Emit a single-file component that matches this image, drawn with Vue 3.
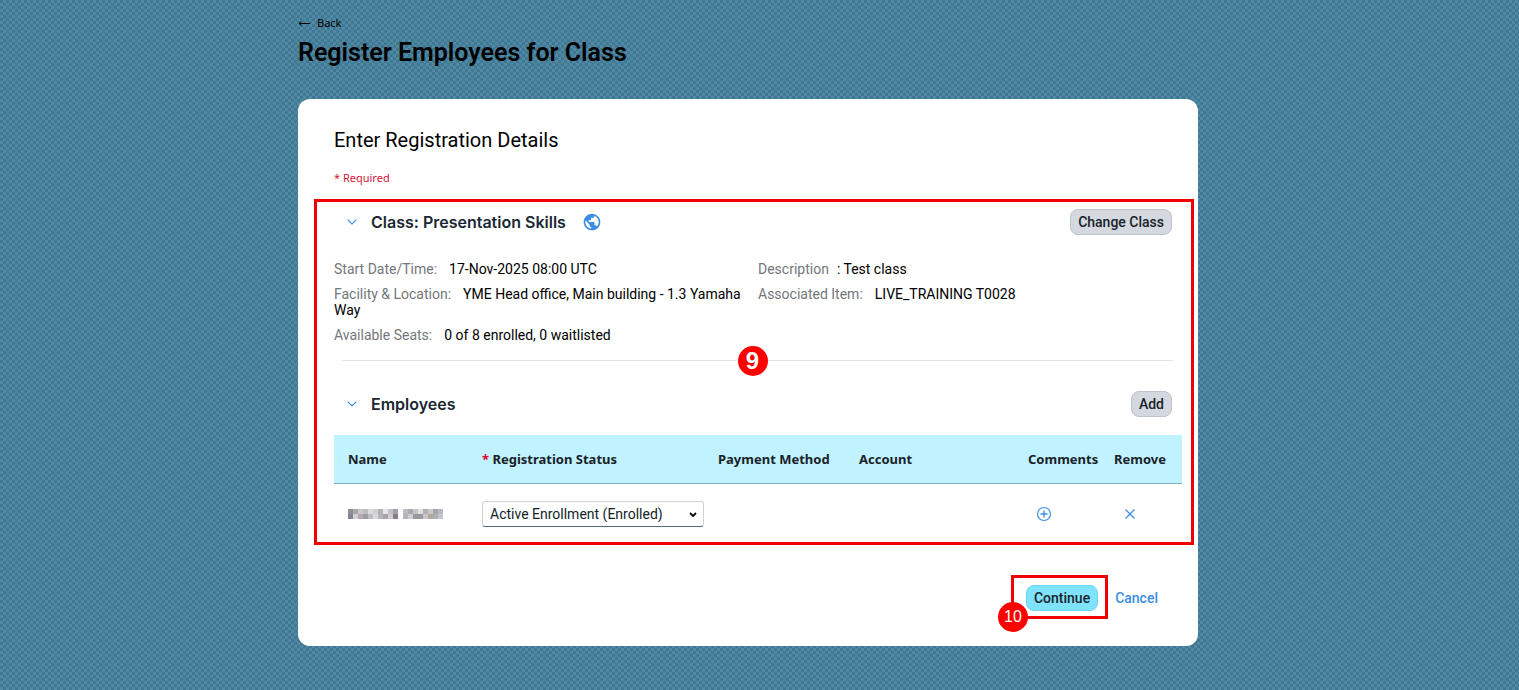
<script setup>
import { ref } from 'vue'

const status = ref('Active Enrollment (Enrolled)')
const classOpen = ref(true)
const employeesOpen = ref(true)

const shades = [
  '8d9099', 'a9a6a8', 'c9c9cd', 'bdbcc0', 'dcdcdf', 'cfcfd2', 'b3b2b5', 'e6e6e8', 'c2c0c4', 'a09da3', 'ffffff', 'b9bdc4', 'a9a8ab', 'c4c4c8', 'e0e0e2', 'b2afb2', 'c9c8cb', 'a4a5a9', 'b5b9c0',
  '7f8590', 'd6cfd3', 'b1aab0', '9d9ba4', 'bcbcc0', 'd9d9db', 'b8b6b9', 'a8a5aa', 'd0cdd0', '887f85', 'ffffff', 'b2b5bd', 'd2cdd0', '9a989d', '9899a1', 'c9c7ca', 'b3a89f', 'a9afb3', 'c0c7d1',
]
const tiles = shades.map((fill, i) => ({ fill: '#' + fill, x: (i % 19) * 5, y: Math.floor(i / 19) * 5 }))
</script>

<template>
  <div class="page">
    <main class="column">
      <a href="#" class="back">
        <svg width="12" height="8" viewBox="0 0 12 8" aria-hidden="true"><path d="M12 4.500H1M3.500 2.500L1 4.500l2.500 2" fill="none" stroke="currentColor" /></svg>
        Back
      </a>
      <h1>Register Employees for Class</h1>

      <section class="card">
        <h2>Enter Registration Details</h2>
        <p class="required">* Required</p>

        <div class="panel">
          <div class="bar">
            <button class="toggle" aria-label="Toggle class details" @click="classOpen = !classOpen">
              <svg width="10" height="6" viewBox="0 0 10 6"><path d="M.7.7L5 5 9.300.7" fill="none" stroke="currentColor" stroke-width="1.200" /></svg>
            </button>
            <h3>Class: Presentation Skills</h3>
            <svg class="globe" width="20" height="20" viewBox="0 0 24 24" aria-hidden="true">
              <path fill="#3b8ee4" d="M12 2C6.480 2 2 6.480 2 12s4.480 10 10 10 10-4.480 10-10S17.520 2 12 2zm-1 17.930c-3.950-.49-7-3.850-7-7.930 0-.62.08-1.210.21-1.790L9 15v1c0 1.100.9 2 2 2v1.930zm6.900-2.540c-.26-.81-1-1.390-1.900-1.390h-1v-3c0-.55-.45-1-1-1H8v-2h2c.55 0 1-.45 1-1V7h2c1.100 0 2-.9 2-2v-.41c2.930 1.190 5 4.060 5 7.410 0 2.080-.8 3.970-2.100 5.390z" />
            </svg>
            <button class="btn">Change Class</button>
          </div>

          <div class="details">
            <div class="group">
              <p><span>Start Date/Time:</span>17-Nov-2025 08:00 UTC</p>
              <p><span>Facility &amp; Location:</span>YME Head office, Main building - 1.3 Yamaha Way</p>
              <p><span>Available Seats:</span>0 of 8 enrolled, 0 waitlisted</p>
            </div>
            <div class="group">
              <p><span class="tight">Description</span>: Test class</p>
              <p><span>Associated Item:</span>LIVE_TRAINING T0028</p>
            </div>
          </div>

          <div class="divider"><b class="badge nine">9</b></div>

          <div class="bar">
            <button class="toggle" aria-label="Toggle employees" @click="employeesOpen = !employeesOpen">
              <svg width="10" height="6" viewBox="0 0 10 6"><path d="M.7.7L5 5 9.300.7" fill="none" stroke="currentColor" stroke-width="1.200" /></svg>
            </button>
            <h3>Employees</h3>
            <button class="btn">Add</button>
          </div>

          <div class="table-wrap">
            <table>
              <colgroup><col class="c1" /><col class="c2" /><col class="c3" /><col class="c4" /><col class="c5" /><col class="c6" /></colgroup>
              <thead>
                <tr>
                  <th>Name</th>
                  <th><label for="status"><i>*</i> Registration Status</label></th>
                  <th>Payment Method</th>
                  <th>Account</th>
                  <th>Comments</th>
                  <th>Remove</th>
                </tr>
              </thead>
              <tbody>
                <tr>
                  <td>
                    <svg class="mosaic" width="95" height="10" viewBox="0 0 95 10" shape-rendering="crispEdges" role="img" aria-label="Name hidden">
                      <rect v-for="(t, i) in tiles" :key="i" :x="t.x" :y="t.y" width="5" height="5" :fill="t.fill" />
                    </svg>
                  </td>
                  <td>
                    <div class="select">
                      <select id="status" v-model="status"><option>Active Enrollment (Enrolled)</option></select>
                      <svg width="8" height="6" viewBox="0 0 8 6" aria-hidden="true"><path d="M1 1l3 3 3-3" fill="none" stroke="#000" stroke-width="1.800" /></svg>
                    </div>
                  </td>
                  <td></td>
                  <td></td>
                  <td>
                    <button class="icon" aria-label="Add comment">
                      <svg width="16" height="16" viewBox="0 0 16 16"><circle cx="8" cy="8" r="6.500" fill="none" stroke="currentColor" stroke-width="1.200" /><path d="M8 4.500v7M4.500 8h7" stroke="currentColor" stroke-width="1.400" /></svg>
                    </button>
                  </td>
                  <td>
                    <button class="icon" aria-label="Remove employee">
                      <svg width="16" height="16" viewBox="0 0 16 16"><path d="M3.500 3.500l9 9M12.500 3.500l-9 9" stroke="currentColor" stroke-width="1.300" /></svg>
                    </button>
                  </td>
                </tr>
              </tbody>
            </table>
          </div>
        </div>

        <div class="actions">
          <div class="mark"><button class="btn primary">Continue</button><b class="badge ten">10</b></div>
          <button class="link">Cancel</button>
        </div>
      </section>
    </main>
  </div>
</template>

<style>
body {
  background-color: #5089a4;
  background-image:
    conic-gradient(transparent 75%, #407792 0),
    conic-gradient(transparent 75%, #407792 0);
  background-size: 6px 6px;
  background-position: 0 0, 3px 3px;
}
</style>

<style scoped>
.page {
  padding: 15px 23px 44px 0;
  font: 14px/16px Roboto, "Noto Sans", sans-serif;
  color: #000;
}
.column { max-width: 900px; margin: 0 auto; }
.back {
  display: flex;
  align-items: center;
  gap: 7px;
  font: 11px/16px "Noto Sans", sans-serif;
  color: #000;
  text-decoration: none;
}
h1, h2, h3, p { margin: 0; }
h1 { margin-top: 6px; font: 600 25px/32px Roboto, sans-serif; }
.card { margin-top: 30px; padding: 29px 0 27px; border-radius: 12px; background: #fff; }
h2 { padding-left: 36px; font: 400 20px/24px Roboto, sans-serif; }
.required { padding: 18px 0 13px 36px; font: 11px/16px "Noto Sans", sans-serif; color: #d4143c; }
.panel { margin: 0 4px 0 16px; padding-top: 7px; border: 3px solid #f00000; }
.bar { display: flex; align-items: center; padding: 0 19px 0 28px; }
.toggle, .icon, .link { border: 0; padding: 0; background: none; color: #3b8ee4; }
.toggle { display: flex; width: 26px; height: 16px; padding: 0 2px; align-items: center; }
h3 { font: 600 16px/18px Inter, sans-serif; color: #1a2733; }
.globe { margin-left: 16px; }
.btn {
  height: 26px;
  margin-left: auto;
  padding: 0 7px;
  border: 1px solid #bcc3ca;
  border-radius: 8px;
  background: #d3d9df;
  color: #1a2229;
  font: 500 14px/16px Roboto, sans-serif;
}
.details { display: grid; grid-template-columns: 424px 1fr; padding: 26px 17px 17px; }
.group { display: grid; gap: 9px; align-content: start; padding-right: 8px; }
.group span { margin-right: 12px; color: #73777a; }
.group .tight { margin-right: 8px; }
.divider { position: relative; margin: 0 18px 30px 25px; height: 1px; background: #e2e4e6; }
.badge {
  position: absolute;
  display: flex;
  align-items: center;
  justify-content: center;
  width: 30px;
  height: 30px;
  border-radius: 50%;
  background: #f00;
  color: #fff;
}
.nine { top: -14px; left: calc(50% - 20px); font: 700 24px/30px "Liberation Sans", sans-serif; }
.table-wrap { padding: 18px 9px 0 17px; }
table { width: 100%; table-layout: fixed; border-collapse: collapse; }
.c1 { width: 134px; }
.c2 { width: 236px; }
.c3 { width: 141px; }
.c4 { width: auto; }
.c5 { width: 86px; }
.c6 { width: 82px; }
th {
  height: 48px;
  padding: 0 0 0 14px;
  border-bottom: 1px solid #7fb0c4;
  background: #c0f3ff;
  color: #1a2229;
  text-align: left;
  white-space: nowrap;
  font: 700 13px/16px "Noto Sans", sans-serif;
}
th i { color: #e00030; font-style: normal; }
td { height: 56px; padding: 2px 0 0 14px; }
.mosaic { display: block; }
.select { position: relative; width: 222px; }
select {
  display: block;
  appearance: none;
  width: 100%;
  height: 26px;
  padding: 0 24px 0 7px;
  border: 1px solid #cdd3d8;
  border-bottom-color: #556b82;
  border-radius: 3px;
  background: #fff;
  color: #131e29;
  font: 14px/16px Roboto, sans-serif;
}
.select svg { position: absolute; top: 11px; right: 7px; pointer-events: none; }
.icon { display: flex; margin-left: 8px; }
.actions { display: flex; align-items: center; justify-content: flex-end; gap: 7px; padding: 30px 40px 0 0; }
.mark { position: relative; display: flex; padding: 7px 7px 5px 12px; border: 3px solid #f00000; }
.primary { border-color: #6cd6f2; background: #7fe3ff; }
.ten { bottom: -16px; left: -16px; font: 400 16px/30px "Liberation Sans", sans-serif; }
.link { padding-top: 2px; font: 500 14px/16px Roboto, sans-serif; }
</style>
